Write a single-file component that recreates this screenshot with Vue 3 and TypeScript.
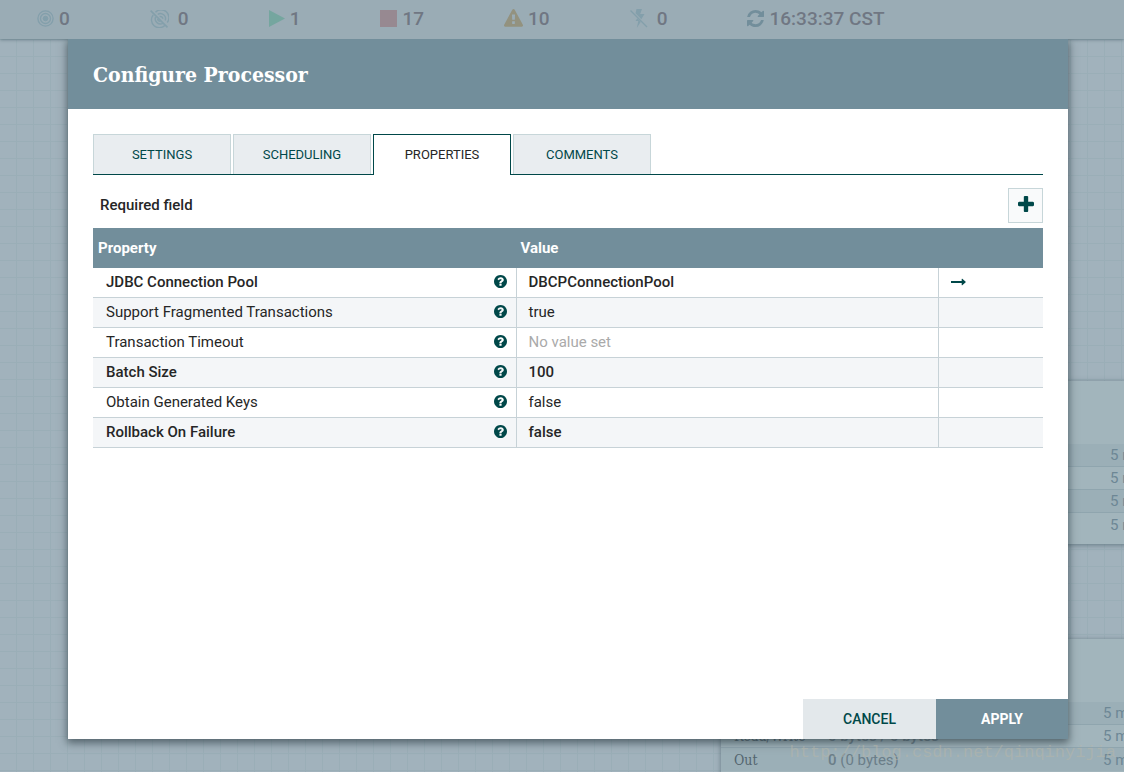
<script setup lang="ts">
import { ref } from 'vue'

interface Property {
  name: string
  value: string | null
  required: boolean
  service?: boolean
}

const tabs: string[] = ['Settings', 'Scheduling', 'Properties', 'Comments']
const activeTab = ref<string>('Properties')

const properties: Property[] = [
  { name: 'JDBC Connection Pool', value: 'DBCPConnectionPool', required: true, service: true },
  { name: 'Support Fragmented Transactions', value: 'true', required: false },
  { name: 'Transaction Timeout', value: null, required: false },
  { name: 'Batch Size', value: '100', required: true },
  { name: 'Obtain Generated Keys', value: 'false', required: false },
  { name: 'Rollback On Failure', value: 'false', required: true },
]
</script>

<template>
  <div class="app">
    <div class="canvas" aria-hidden="true">
      <section class="card card-upper">
        <div class="card-head"></div>
        <div v-for="n in 4" :key="n" class="stat"><span class="window">5 min</span></div>
      </section>
      <section class="card card-lower">
        <div class="card-head"></div>
        <div class="stat"><span class="window">5 min</span></div>
        <div class="stat"><span class="label">Read/Write</span><b>0 bytes / 0 bytes</b><span class="window">5 min</span></div>
        <div class="stat"><span class="label">Out</span><span><b>0</b> (0 bytes)</span><span class="window">5 min</span></div>
      </section>
    </div>

    <header class="status-bar">
      <div class="status">
        <svg class="icon faint" width="17" height="17" viewBox="0 0 17 17" fill="none" stroke="currentColor">
          <circle cx="8.500" cy="8.500" r="7.600" stroke-width="1.300" />
          <circle cx="8.500" cy="8.500" r="5" stroke-width="1.300" />
          <circle cx="8.500" cy="8.500" r="2.300" fill="currentColor" />
        </svg>
        <span>0</span>
      </div>
      <div class="status wide">
        <svg class="icon faint" width="19" height="18" viewBox="0 0 19 18" fill="none" stroke="currentColor">
          <path d="M5.500 2.200A7.800 7.800 0 0 1 17.200 12.500M14.800 15.400A7.800 7.800 0 0 1 3.200 5" stroke-width="1.400" />
          <path d="M7.700 4.300A5.200 5.200 0 0 1 15.200 10.600M12.800 13.300A5.200 5.200 0 0 1 5.500 7" stroke-width="1.400" />
          <path d="M9.600 6.500A2.600 2.600 0 0 1 12.800 8.800M10.500 11.400A2.600 2.600 0 0 1 7.700 9" stroke-width="1.500" />
          <path d="M.600 .600L17.500 17.400" stroke-width="1.600" />
        </svg>
        <span>0</span>
      </div>
      <div class="status">
        <svg class="icon running" width="16" height="17" viewBox="0 0 16 17"><path d="M0 0L16 8.500L0 17Z" fill="currentColor" /></svg>
        <span>1</span>
      </div>
      <div class="status">
        <svg class="icon stopped" width="17" height="17" viewBox="0 0 17 17"><path d="M0 0H17V17H0Z" fill="currentColor" /></svg>
        <span>17</span>
      </div>
      <div class="status">
        <svg class="icon invalid" width="19" height="19" viewBox="0 0 1792 1792"><path fill="currentColor" d="M1024 1375v-190q0-14-9.500-23.500t-22.500-9.500h-192q-13 0-22.500 9.500t-9.500 23.500v190q0 14 9.500 23.500t22.500 9.500h192q13 0 22.500-9.500t9.500-23.500zm-2-374l18-459q0-12-10-19-13-11-24-11h-220q-11 0-24 11-10 7-10 21l17 457q0 10 10 16.500t24 6.500h185q14 0 23.500-6.500t10.500-16.500zm-14-934l768 1408q35 63-2 126-17 29-46.500 46t-63.500 17h-1536q-34 0-63.500-17t-46.500-46q-37-63-2-126l768-1408q17-31 47-49t65-18 65 18 47 49z" /></svg>
        <span>10</span>
      </div>
      <div class="status wide">
        <svg class="icon faint" width="18" height="19" viewBox="0 0 18 19">
          <path d="M6.500 0H12L10.200 5H14.500L11.300 10.300L5.500 4.300ZM7.300 9.300L10.800 12.700L6.800 19L8.300 12H5.500Z" fill="currentColor" />
          <path d="M.500 1.500L17 18" stroke="currentColor" stroke-width="1.400" />
        </svg>
        <span>0</span>
      </div>
      <div class="status">
        <svg class="icon refresh" width="17" height="17" viewBox="0 0 1536 1536"><path fill="currentColor" d="M1511 928q0 5-1 7-64 268-268 434.500t-478 166.500q-146 0-282.500-55t-243.500-157l-129 129q-19 19-45 19t-45-19-19-45v-448q0-26 19-45t45-19h448q26 0 45 19t19 45-19 45l-137 137q71 66 161 102t187 36q134 0 250-65t186-179q11-17 53-117 8-23 30-23h192q13 0 22.500 9.500t9.500 22.500zm25-800v448q0 26-19 45t-45 19h-448q-26 0-45-19t-19-45 19-45l138-138q-148-137-349-137-134 0-250 65t-186 179q-11 17-53 117-8 23-30 23h-199q-13 0-22.500-9.500t-9.500-22.500v-7q65-268 270-434.500t480-166.500q146 0 284 55.500t245 156.500l130-129q19-19 45-19t45 19 19 45z" /></svg>
        <span>16:33:37 CST</span>
      </div>
    </header>

    <main class="stage">
      <section class="dialog" role="dialog" aria-labelledby="dialog-title">
        <h1 id="dialog-title" class="dialog-title">Configure Processor</h1>

        <div class="dialog-body">
          <div class="tabs" role="tablist">
            <button
              v-for="tab in tabs"
              :key="tab"
              type="button"
              role="tab"
              class="tab"
              :class="{ active: tab === activeTab }"
              :aria-selected="tab === activeTab"
              @click="activeTab = tab"
            >{{ tab }}</button>
          </div>

          <div class="toolbar">
            <span class="required">Required field</span>
            <button type="button" class="add" aria-label="Add property">
              <svg width="16" height="16" viewBox="192 128 1408 1408"><path fill="currentColor" d="M1600 736v192q0 40-28 68t-68 28h-416v416q0 40-28 68t-68 28h-192q-40 0-68-28t-28-68v-416h-416q-40 0-68-28t-28-68v-192q0-40 28-68t68-28h416v-416q0-40 28-68t68-28h192q40 0 68 28t28 68v416h416q40 0 68 28t28 68z" /></svg>
            </button>
          </div>

          <table class="properties">
            <colgroup>
              <col />
              <col />
              <col class="col-action" />
            </colgroup>
            <thead>
              <tr>
                <th scope="col">Property</th>
                <th scope="col">Value</th>
                <td></td>
              </tr>
            </thead>
            <tbody>
              <tr v-for="item in properties" :key="item.name" :class="{ strong: item.required }">
                <td>
                  <div class="name">
                    <span>{{ item.name }}</span>
                    <button type="button" class="plain" :aria-label="`About ${item.name}`">
                      <svg width="13" height="13" viewBox="128 128 1536 1536"><path fill="currentColor" d="M1024 1376v-192q0-14-9-23t-23-9h-192q-14 0-23 9t-9 23v192q0 14 9 23t23 9h192q14 0 23-9t9-23zm256-672q0-88-55.500-163t-138.500-116-170-41q-243 0-371 213-15 24 8 42l132 100q7 6 19 6 16 0 25-12 53-68 86-92 34-24 86-24 48 0 85.500 26t37.500 59q0 38-20 61t-68 45q-63 28-115.500 86.500t-52.500 125.500v36q0 14 9 23t23 9h192q14 0 23-9t9-23q0-19 21.500-49.500t54.500-49.500q32-18 49-28.500t46-35 44.500-48 28-60.500 12.500-81zm384 192q0 209-103 385.500t-279.500 279.500-385.500 103-385.500-103-279.500-279.500-103-385.500 103-385.500 279.500-279.500 385.500-103 385.500 103 279.500 279.500 103 385.500z" /></svg>
                    </button>
                  </div>
                </td>
                <td :class="{ unset: item.value === null }">{{ item.value ?? 'No value set' }}</td>
                <td>
                  <button v-if="item.service" type="button" class="plain" aria-label="Go to service">
                    <svg width="15" height="8" viewBox="0 0 15 8"><path fill="currentColor" d="M0 3.100Q0 2.900 .300 2.900H10.700V.900Q10.900 .500 11.300 .800L14.700 3.700Q15 4 14.700 4.300L11.300 7.200Q10.900 7.500 10.700 7.100V5.100H.300Q0 5.100 0 4.900Z" /></svg>
                  </button>
                </td>
              </tr>
            </tbody>
          </table>
        </div>

        <footer class="actions">
          <button type="button" class="action cancel">Cancel</button>
          <button type="button" class="action apply">Apply</button>
        </footer>
      </section>
    </main>

    <div class="watermark">http://blog.csdn.net/qinqinyijia</div>
  </div>
</template>

<style>
body {
  margin: 0;
}
</style>

<style scoped>
.app {
  position: relative;
  display: flex;
  flex-direction: column;
  min-height: 100vh;
  overflow: hidden;
  font-family: Roboto, "Liberation Sans", sans-serif;
  font-size: 15px;
  color: #262626;
  background: #a1b2bc;
}

button {
  font: inherit;
  margin: 0;
  padding: 0;
  border: 0;
  cursor: pointer;
}

svg {
  display: block;
}

/* Flow canvas behind the dialog */
.canvas {
  position: absolute;
  inset: 0;
  overflow: hidden;
  background-image:
    linear-gradient(to right, #9aaeb7 1px, transparent 1px),
    linear-gradient(to bottom, #9aaeb7 1px, transparent 1px);
  background-size: 17px 17px;
  background-position: 16px 5px;
}

.card {
  position: absolute;
  width: 440px;
  background: #a2b5bc;
  box-shadow: 0 1px 5px rgba(60, 85, 95, 0.6);
  color: #6b7e89;
}

.card-upper {
  left: 728px;
  top: 381px;
  padding-bottom: 8px;
}

.card-lower {
  left: 721px;
  top: 639px;
  padding-bottom: 8px;
}

.card-head {
  height: 63px;
}

.stat {
  display: flex;
  align-items: center;
  box-sizing: border-box;
  height: 23px;
  padding: 0 13px;
  border-bottom: 1px solid #8fa5ae;
}

.stat:last-child {
  border-bottom: 0;
}

.stat:nth-child(even) {
  background: #9bafb7;
}

.label {
  width: 94px;
  font-family: "Roboto Slab", "DejaVu Serif Condensed", "DejaVu Serif", serif;
  font-size: 14px;
  color: #53656f;
}

.stat b {
  font-weight: 500;
}

.window {
  width: 45px;
  margin-left: auto;
  color: #6d8795;
}

/* Status bar */
.status-bar {
  position: relative;
  display: flex;
  align-items: center;
  gap: 80px;
  height: 39px;
  padding: 0 37px 2px;
  box-sizing: border-box;
  background: #9aacb5;
  box-shadow: 0 1px 3px rgba(60, 85, 95, 0.5);
  font-size: 19px;
  font-weight: 500;
  line-height: 22px;
  color: #707783;
  white-space: nowrap;
}

.status {
  display: flex;
  align-items: center;
  gap: 5px;
}

.wide {
  gap: 9px;
}

.icon {
  flex: none;
}

.faint {
  color: #839fab;
}

.running {
  color: #75a69f;
}

.stopped {
  color: #978991;
}

.invalid {
  color: #93927f;
}

.refresh {
  color: #728e9b;
}

/* Dialog */
.stage {
  position: relative;
  display: flex;
  flex: 1;
  padding: 0 56px 33px 68px;
  overflow: hidden;
}

.dialog {
  display: flex;
  flex: 1;
  flex-direction: column;
  min-width: 0;
  background: #fff;
  box-shadow: 0 3px 8px 1px rgba(50, 65, 72, 0.7);
}

.dialog-title {
  margin: 0;
  padding: 2px 25px 0;
  background: #728e9b;
  color: #fff;
  font-family: "Roboto Slab", "DejaVu Serif Condensed", "DejaVu Serif", serif;
  font-size: 21px;
  font-weight: 700;
  line-height: 68px;
}

.dialog-body {
  flex: 1;
  padding: 25px 25px 0;
}

.tabs {
  display: flex;
  gap: 2px;
  border-bottom: 1px solid #004849;
}

.tab {
  box-sizing: border-box;
  width: 138px;
  height: 40px;
  border: 1px solid #c7d6d9;
  border-bottom: 0;
  background: #e9edf0;
  color: #004849;
  font-size: 13px;
  text-transform: uppercase;
}

.tab.active {
  height: 41px;
  margin-bottom: -1px;
  padding-bottom: 1px;
  border-color: #004849;
  background: #fff;
  color: #262626;
}

.toolbar {
  display: flex;
  align-items: center;
  justify-content: space-between;
  padding: 13px 0 5px 7px;
}

.required {
  padding-bottom: 2px;
  font-weight: 500;
}

.add {
  display: grid;
  place-items: center;
  box-sizing: border-box;
  width: 35px;
  height: 35px;
  padding-bottom: 3px;
  border: 1px solid #c7d6d9;
  background: #f9fafb;
  color: #004849;
}

.properties {
  width: 100%;
  table-layout: fixed;
  border-spacing: 0;
}

.col-action {
  width: 105px;
}

.properties thead {
  background: #728e9b;
  color: #fff;
}

.properties th {
  height: 40px;
  padding: 0 5px;
  font-weight: 700;
  text-align: left;
}

.properties tbody td {
  box-sizing: border-box;
  height: 30px;
  padding: 0 9px 2px 13px;
  border-bottom: 1px solid #c7d2d7;
  line-height: 20px;
}

.properties tbody td + td {
  border-left: 1px solid #c7d2d7;
  padding-left: 12px;
}

.properties tbody tr:nth-child(even) {
  background: #f4f6f8;
}

.strong {
  font-weight: 500;
}

.properties .unset {
  color: #aaa;
}

.name {
  display: flex;
  align-items: center;
  justify-content: space-between;
}

.plain {
  display: block;
  background: none;
  color: #004849;
}

.actions {
  display: flex;
  justify-content: flex-end;
}

.action {
  height: 40px;
  font-size: 14px;
  font-weight: 500;
  text-transform: uppercase;
}

.cancel {
  width: 133px;
  background: #e3e8eb;
  color: #004849;
}

.apply {
  width: 132px;
  background: #728e9b;
  color: #fff;
  font-weight: 700;
}

.watermark {
  position: absolute;
  right: 8px;
  bottom: 9px;
  font-family: "Liberation Mono", monospace;
  font-size: 17px;
  line-height: 20px;
  color: rgba(184, 182, 168, 0.5);
}
</style>
